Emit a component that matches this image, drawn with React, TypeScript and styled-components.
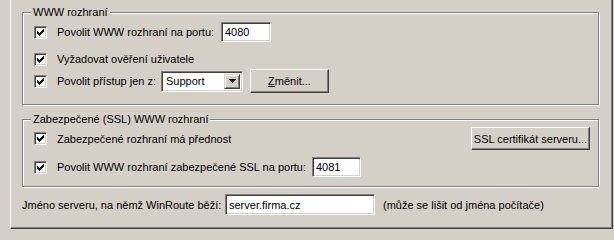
import React from 'react';
import styled, { createGlobalStyle } from 'styled-components';

const GlobalStyle = createGlobalStyle`
  html, body {
    margin: 0;
    padding: 0;
    background: #d4d0c8;
  }
  body {
    font-family: 'Liberation Sans', Arial, sans-serif;
    font-size: 11px;
    color: #000;
  }
`;

const CheckMark = () => (
  <svg width="7" height="7" viewBox="0 0 7 7" shapeRendering="crispEdges">
    <rect x="6" y="0" width="1" height="1" fill="#000" />
    <rect x="5" y="1" width="2" height="1" fill="#000" />
    <rect x="0" y="2" width="1" height="1" fill="#000" />
    <rect x="4" y="2" width="3" height="1" fill="#000" />
    <rect x="0" y="3" width="2" height="1" fill="#000" />
    <rect x="3" y="3" width="3" height="1" fill="#000" />
    <rect x="0" y="4" width="5" height="1" fill="#000" />
    <rect x="1" y="5" width="3" height="1" fill="#000" />
    <rect x="2" y="6" width="1" height="1" fill="#000" />
  </svg>
);

const DownArrow = () => (
  <svg width="7" height="4" viewBox="0 0 7 4" shapeRendering="crispEdges">
    <rect x="0" y="0" width="7" height="1" fill="#000" />
    <rect x="1" y="1" width="5" height="1" fill="#000" />
    <rect x="2" y="2" width="3" height="1" fill="#000" />
    <rect x="3" y="3" width="1" height="1" fill="#000" />
  </svg>
);

const CheckBox = ({ checked = true }: { checked?: boolean }) => (
  <CheckFrame>{checked && <CheckMark />}</CheckFrame>
);

const App = () => {
  return (
    <>
      <GlobalStyle />
      <Page>
        <Group $h={93}>
          <Legend>WWW rozhraní</Legend>
          <Row $mt={9} $h={20}>
            <CheckBox />
            <CheckLabel $w={164}>Povolit WWW rozhraní na portu:</CheckLabel>
            <Edit $w={50} $h={20}>4080</Edit>
          </Row>
          <Row $mt={7} $h={20}>
            <CheckBox />
            <CheckLabel>Vyžadovat ověření uživatele</CheckLabel>
          </Row>
          <Row $mt={0} $h={24}>
            <CheckBox />
            <CheckLabel $w={104}>Povolit přístup jen z:</CheckLabel>
            <Combo>
              <ComboText>Support</ComboText>
              <ComboButton>
                <DownArrow />
              </ComboButton>
            </Combo>
            <Button $w={79} $h={24} $ml={7}>
              <u>Z</u>měnit...
            </Button>
          </Row>
        </Group>

        <Group $h={68} $mt={14}>
          <Legend>Zabezpečené (SSL) WWW rozhraní</Legend>
          <Row $mt={7} $h={23}>
            <CheckBox />
            <CheckLabel>Zabezpečené rozhraní má přednost</CheckLabel>
            <Spacer />
            <Button $w={119} $h={23} $mr={8}>
              SSL certifikát serveru...
            </Button>
          </Row>
          <Row $mt={7} $h={20}>
            <CheckBox />
            <CheckLabel $w={255}>
              Povolit WWW rozhraní zabezpečené SSL na portu:
            </CheckLabel>
            <Edit $w={49} $h={20}>4081</Edit>
          </Row>
        </Group>

        <ServerRow>
          <PlainLabel $w={203}>Jméno serveru, na němž WinRoute běží:</PlainLabel>
          <Edit $w={150} $h={21}>server.firma.cz</Edit>
          <Hint>(může se lišit od jména počítače)</Hint>
        </ServerRow>
      </Page>
    </>
  );
};

export default App;

const Page = styled.div`
  box-sizing: border-box;
  margin-left: 10px;
  width: 603px;
  height: 229px;
  padding: 12px 0 0 11px;
  border-left: 1px solid #ffffff;
  border-right: 1px solid #404040;
  border-bottom: 1px solid #404040;
  box-shadow: inset -1px -1px 0 #808080;
  display: flex;
  flex-direction: column;
`;

const Group = styled.div<{ $h: number; $mt?: number }>`
  position: relative;
  box-sizing: border-box;
  width: 577px;
  height: ${({ $h }) => $h}px;
  margin-top: ${({ $mt = 0 }) => $mt}px;
  padding-left: 11px;
  border: 1px solid #808080;
  box-shadow: 1px 1px 0 #ffffff, inset 1px 1px 0 #ffffff;
  display: flex;
  flex-direction: column;
`;

const Legend = styled.div`
  position: absolute;
  top: -7px;
  left: 8px;
  padding: 0 2px;
  line-height: 13px;
  background: #d4d0c8;
  white-space: nowrap;
`;

const Row = styled.div<{ $mt: number; $h: number }>`
  display: flex;
  align-items: center;
  margin-top: ${({ $mt }) => $mt}px;
  height: ${({ $h }) => $h}px;
`;

const CheckFrame = styled.span`
  box-sizing: border-box;
  flex: none;
  width: 13px;
  height: 13px;
  display: flex;
  align-items: center;
  justify-content: center;
  background: #ffffff;
  border-style: solid;
  border-width: 1px;
  border-color: #808080 #ffffff #ffffff #808080;
  box-shadow: inset 1px 1px 0 #404040, inset -1px -1px 0 #d4d0c8;
`;

const CheckLabel = styled.span<{ $w?: number }>`
  flex: none;
  margin-left: 10px;
  width: ${({ $w }) => ($w ? `${$w}px` : 'auto')};
  white-space: nowrap;
`;

const PlainLabel = styled.span<{ $w: number }>`
  flex: none;
  width: ${({ $w }) => $w}px;
  white-space: nowrap;
`;

const Edit = styled.div<{ $w: number; $h: number }>`
  box-sizing: border-box;
  flex: none;
  width: ${({ $w }) => $w}px;
  height: ${({ $h }) => $h}px;
  padding-left: 3px;
  display: flex;
  align-items: center;
  background: #ffffff;
  border-style: solid;
  border-width: 1px;
  border-color: #808080 #ffffff #ffffff #808080;
  box-shadow: inset 1px 1px 0 #404040, inset -1px -1px 0 #d4d0c8;
  white-space: nowrap;
  overflow: hidden;
`;

const Combo = styled.div`
  box-sizing: border-box;
  flex: none;
  width: 82px;
  height: 21px;
  display: flex;
  align-items: stretch;
  padding: 2px;
  background: #ffffff;
  border-style: solid;
  border-width: 1px;
  border-color: #808080 #ffffff #ffffff #808080;
  box-shadow: inset 1px 1px 0 #404040, inset -1px -1px 0 #d4d0c8;
`;

const ComboText = styled.span`
  flex: 1;
  display: flex;
  align-items: center;
  padding-left: 2px;
`;

const ComboButton = styled.span`
  box-sizing: border-box;
  flex: none;
  width: 16px;
  display: flex;
  align-items: center;
  justify-content: center;
  background: #d4d0c8;
  border-style: solid;
  border-width: 1px;
  border-color: #d4d0c8 #404040 #404040 #d4d0c8;
  box-shadow: inset 1px 1px 0 #ffffff, inset -1px -1px 0 #808080;
`;

const Button = styled.div<{ $w: number; $h: number; $ml?: number; $mr?: number }>`
  box-sizing: border-box;
  flex: none;
  width: ${({ $w }) => $w}px;
  height: ${({ $h }) => $h}px;
  margin-left: ${({ $ml = 0 }) => $ml}px;
  margin-right: ${({ $mr = 0 }) => $mr}px;
  display: flex;
  align-items: center;
  justify-content: center;
  background: #d4d0c8;
  border-style: solid;
  border-width: 1px;
  border-color: #ffffff #404040 #404040 #ffffff;
  box-shadow: inset -1px -1px 0 #808080;
  white-space: nowrap;
`;

const Spacer = styled.span`
  flex: 1;
`;

const ServerRow = styled.div`
  display: flex;
  align-items: center;
  margin-top: 7px;
  height: 21px;
`;

const Hint = styled.span`
  margin-left: 8px;
  white-space: nowrap;
`;
